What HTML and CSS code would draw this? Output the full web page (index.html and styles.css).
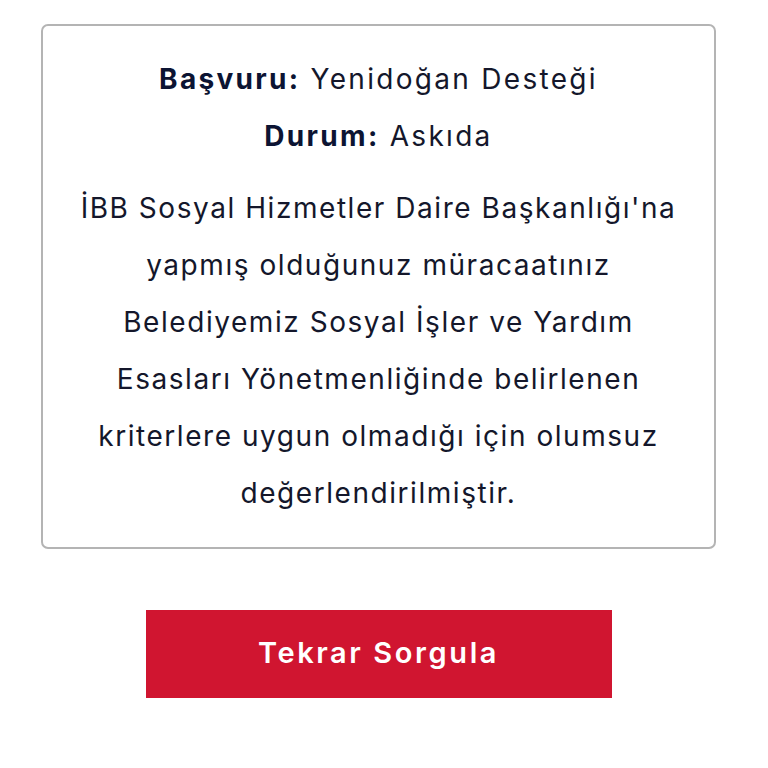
FILE: index.html
```html
<!DOCTYPE html>
<html lang="tr">
<head>
<meta charset="utf-8">
<link rel="stylesheet" href="styles.css">
</head>
<body>
<div class="page">
  <div class="card">
    <p class="meta"><b>Başvuru:</b> Yenidoğan Desteği</p>
    <p class="meta"><b>Durum:</b> Askıda</p>
    <p class="msg">İBB Sosyal Hizmetler Daire Başkanlığı'na<br>yapmış olduğunuz müracaatınız<br>Belediyemiz Sosyal İşler ve Yardım<br>Esasları Yönetmenliğinde belirlenen<br>kriterlere uygun olmadığı için olumsuz<br>değerlendirilmiştir.</p>
  </div>
  <button class="btn">Tekrar Sorgula</button>
</div>
</body>
</html>
```
FILE: styles.css
```css
html, body {
  margin: 0;
  padding: 0;
  background: #ffffff;
}
.page {
  width: 675px;
  margin-left: 41px;
  padding-top: 24px;
  display: flex;
  flex-direction: column;
  align-items: center;
  font-family: "Inter", "Noto Sans", sans-serif;
}
.card {
  box-sizing: border-box;
  width: 675px;
  height: 525px;
  border: 2px solid #b4b4b4;
  border-radius: 7px;
  padding: 25px 6px 0;
  text-align: center;
  color: #14172b;
}
.meta {
  margin: 0;
  font-size: 28px;
  letter-spacing: 2.3px;
  line-height: 57px;
  color: #14172b;
}
.meta b {
  color: #0c1433;
  font-weight: 700;
}
.msg {
  margin: 15px 0 0;
  font-size: 28px;
  letter-spacing: 1.55px;
  line-height: 57px;
}
.btn {
  margin-top: 61px;
  width: 466px;
  height: 88px;
  padding: 0 0 4px;
  border: none;
  border-radius: 0;
  background: #d01530;
  color: #ffffff;
  font-family: "Inter", "Noto Sans", sans-serif;
  font-size: 29px;
  letter-spacing: 2.6px;
  font-weight: 600;
}
```
